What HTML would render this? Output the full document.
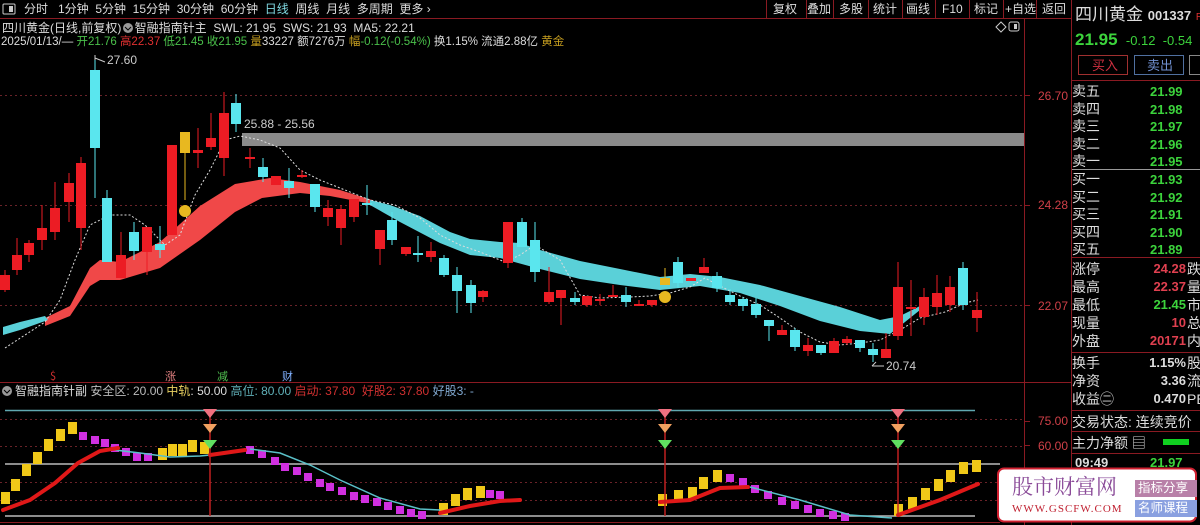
<!DOCTYPE html>
<html><head><meta charset="utf-8"><style>
*{margin:0;padding:0;box-sizing:border-box}
body{width:1200px;height:525px;background:#000;overflow:hidden;position:relative;font-family:"Liberation Sans","Noto Sans CJK SC",sans-serif;color:#ddd}
.t{position:absolute;white-space:nowrap;font-size:12px;line-height:14px}
svg{position:absolute;left:0;top:0}
.rp{position:absolute;left:1072px;font-size:14px;line-height:17px;white-space:nowrap}
</style></head><body>
<svg width="1200" height="525" id="s">
<line x1="0" y1="18.5" x2="1072" y2="18.5" stroke="#8a1a22"/>
<line x1="1024.5" y1="18" x2="1024.5" y2="525" stroke="#8a1a22"/>
<line x1="1071.5" y1="0" x2="1071.5" y2="525" stroke="#8a1a22"/>
<line x1="0" y1="382.5" x2="1072" y2="382.5" stroke="#8a1a22"/>
<line x1="0" y1="522.5" x2="1000" y2="522.5" stroke="#8a1a22"/>
<g stroke="#8a1a22">
<line x1="766.5" y1="0" x2="766.5" y2="18"/><line x1="806.5" y1="0" x2="806.5" y2="18"/><line x1="833.5" y1="0" x2="833.5" y2="18"/><line x1="868.5" y1="0" x2="868.5" y2="18"/><line x1="902.5" y1="0" x2="902.5" y2="18"/><line x1="935.5" y1="0" x2="935.5" y2="18"/><line x1="969.5" y1="0" x2="969.5" y2="18"/><line x1="1003.5" y1="0" x2="1003.5" y2="18"/><line x1="1036.5" y1="0" x2="1036.5" y2="18"/>
</g>
<g stroke="#6a2228" stroke-dasharray="2,3">
<line x1="0" y1="95.5" x2="1024" y2="95.5"/><line x1="0" y1="205.5" x2="1024" y2="205.5"/><line x1="0" y1="305.5" x2="1024" y2="305.5"/>
<line x1="0" y1="419.5" x2="1024" y2="419.5"/><line x1="0" y1="446.5" x2="1024" y2="446.5"/><line x1="0" y1="482.5" x2="1024" y2="482.5"/><line x1="0" y1="500.5" x2="1024" y2="500.5"/>
</g>
<g stroke="#8a1a22"><line x1="1024" y1="95.5" x2="1030" y2="95.5"/><line x1="1024" y1="205.5" x2="1030" y2="205.5"/><line x1="1024" y1="305.5" x2="1030" y2="305.5"/><line x1="1024" y1="421.5" x2="1030" y2="421.5"/><line x1="1024" y1="445.5" x2="1030" y2="445.5"/></g>
<rect x="242" y="133" width="782" height="13" fill="#8a8a8a"/>
<path d="M45,318 L70,306 L90,268 L100,260 L120,262 L160,242 L200,206 L235,184 L270,178 L300,182 L340,190 L372,200 L372,204 L330,196 L300,193 L262,198 L235,212 L200,240 L160,268 L120,280 L100,280 L90,286 L70,316 L45,326Z" fill="#f04848"/>
<path d="M3,327 L20,322 L45,316 L48,320 L20,330 L3,335Z" fill="#5ad0d8"/>
<path d="M370,200 L390,205 L420,216 L450,232 L470,239 L500,242 L520,243 L540,250 L580,261 L620,269 L660,277 L690,274 L720,277 L760,285 L800,296 L840,307 L880,320 L900,316 L920,306 L920,310 L890,334 L860,331 L820,321 L780,306 L740,293 L700,286 L660,290 L620,285 L580,279 L540,269 L500,258 L470,255 L440,243 L400,222 L370,205Z" fill="#5ad0d8"/>
<path d="M5,348 L25,335 L45,322 L60,300 L75,260 L90,225 L110,215 L130,215 L145,225 L165,245 L180,235 L195,195 L210,170 L225,140 L240,136 L260,140 L280,148 L300,170 L320,180 L345,190 L370,200 L395,205 L420,218 L440,235 L460,245 L480,252 L505,262 L520,255 L535,245 L560,260 L580,295 L600,298 L630,297 L650,296 L670,293 L690,287 L705,278 L720,286 L740,296 L760,305 L780,318 L800,332 L820,342 L840,345 L860,343 L880,340 L900,330 L920,318 L945,312 L965,303 L978,300" stroke="#ddd" stroke-width="1" stroke-dasharray="2,2" fill="none"/>
<g id="c"></g>
<g fill="#ccc" font-size="12" font-family="Liberation Sans,sans-serif">
<text x="107" y="64">27.60</text>
<text x="244" y="128">25.88 - 25.56</text>
<text x="886" y="370">20.74</text>
</g>
<path d="M95,55 L95,60 M95,58 L105,62" stroke="#ccc" fill="none"/>
<path d="M872,366 L884,366 M872,366 L876,362" stroke="#ccc" fill="none"/>
<g fill="#d04048" font-size="12" font-family="Liberation Sans,sans-serif">
<text x="1038" y="100">26.70</text><text x="1038" y="209">24.28</text><text x="1038" y="310">22.07</text><text x="1038" y="425">75.00</text><text x="1038" y="450">60.00</text>
</g>
<g font-size="11" font-family="Noto Sans CJK SC,sans-serif">
<text x="50" y="380" fill="#d03030">$</text><text x="165" y="380" fill="#e08080">涨</text><text x="217" y="380" fill="#50c050">减</text><text x="282" y="380" fill="#80b0ff">财</text>
</g>
<line x1="5" y1="410.5" x2="975" y2="410.5" stroke="#60a8b0" stroke-width="1.5"/>
<line x1="5" y1="464" x2="1000" y2="464" stroke="#bbb" stroke-width="1.5"/>
<line x1="5" y1="516" x2="975" y2="516" stroke="#bbb" stroke-width="1.5"/>
<g id="ind"></g>
<path d="M115,450 L140,453 L170,457 L200,456 L210,455 M250,449 L280,453 L310,465 L340,480 L380,498 L420,509 L440,510 M750,487 L800,500 L850,515 L892,518" stroke="#5ac0c8" stroke-width="1.5" fill="none"/>
<path d="M3,510 L30,500 L55,483 L78,463 L100,451 L118,448 M210,455 L245,450 M440,513 L470,506 L500,501 L520,500 M660,502 L690,500 L720,488 L748,487 M898,515 L940,500 L978,484" stroke="#e01818" stroke-width="4" fill="none" stroke-linecap="round"/>
<g stroke="#c02020" stroke-width="1.5"><line x1="210" y1="412" x2="210" y2="516"/><line x1="665" y1="412" x2="665" y2="516"/><line x1="898" y1="412" x2="898" y2="516"/></g>
<g id="dia"></g>
<path d="M996,27 L1001,22 L1006,27 L1001,32Z" stroke="#ccc" fill="none"/>
<rect x="1009" y="22" width="10" height="9" rx="2" stroke="#ccc" fill="none"/><rect x="1014" y="24" width="3" height="5" fill="#ccc"/>
<g stroke="#8a1a22"><line x1="1072" y1="80.5" x2="1200" y2="80.5"/><line x1="1072" y1="257.5" x2="1200" y2="257.5"/><line x1="1072" y1="352.5" x2="1200" y2="352.5"/><line x1="1072" y1="410.5" x2="1200" y2="410.5"/><line x1="1072" y1="431.5" x2="1200" y2="431.5"/><line x1="1072" y1="453.5" x2="1200" y2="453.5"/></g>
<line x1="1072" y1="169.5" x2="1200" y2="169.5" stroke="#999"/>
<rect x="1078.5" y="55.5" width="49" height="19" stroke="#a03030" fill="none"/>
<rect x="1134.5" y="55.5" width="49" height="19" stroke="#5070a0" fill="none"/>
<rect x="1189.5" y="55.5" width="20" height="19" stroke="#888" fill="none"/>
<rect x="1163" y="439" width="26" height="6" fill="#10d020"/>
<rect x="3" y="4" width="12" height="10" rx="1" stroke="#ccc" fill="none"/><rect x="9" y="6" width="4" height="6" fill="#ccc"/>
<circle cx="128" cy="28" r="5" fill="#999"/><path d="M125,27 L128,30 L131,27" stroke="#000" fill="none"/>
<circle cx="7" cy="391" r="5" fill="#999"/><path d="M4,390 L7,393 L10,390" stroke="#000" fill="none"/>
<rect x="998" y="468.5" width="198" height="53" rx="6" fill="#fff" stroke="#d02030" stroke-width="2"/>
<rect x="1135" y="480" width="62" height="17" fill="#b880a8"/>
<rect x="1135" y="500" width="62" height="17" fill="#8aa0e0"/>
</svg>
<script>
var C=[[5,275,290,'r',270,292],[17,255,270,'r',238,275],[29,243,255,'r',240,262],[42,228,240,'r',205,250],[55,208,232,'r',182,240],[69,183,202,'r',173,222],[81,163,228,'r',157,250],[95,70,148,'c',55,198],[107,198,262,'c',190,262],[121,255,278,'r',232,278],[134,232,251,'c',222,260],[147,227,252,'r',227,275],[160,244,250,'c',226,258],[172,145,235,'r',145,235],[185,132,153,'g',132,200],[198,150,153,'r',128,168],[211,138,147,'r',113,150],[224,113,158,'r',92,176],[236,103,124,'c',94,132],[250,157,158,'r',148,168],[263,167,177,'c',158,182],[276,176,185,'r',176,185],[289,181,188,'c',168,198],[302,175,177,'r',170,178],[315,184,207,'c',184,212],[328,208,217,'r',200,226],[341,209,228,'r',205,245],[354,199,217,'r',199,222],[367,203,205,'c',185,215],[380,230,249,'r',230,265],[392,220,240,'c',212,245],[406,247,254,'r',247,256],[418,253,254,'c',236,262],[431,251,257,'r',242,262],[444,258,275,'c',255,277],[457,275,291,'c',267,313],[471,285,303,'c',280,313],[483,291,297,'r',290,302],[508,222,263,'r',222,268],[522,222,247,'c',218,247],[535,240,272,'c',222,282],[549,292,302,'r',267,304],[561,290,298,'r',290,325],[575,298,302,'c',292,305],[587,296,305,'r',296,307],[600,299,301,'r',294,305],[613,295,297,'r',285,297],[626,295,302,'c',287,307],[639,304,306,'r',300,306],[652,300,305,'r',300,307],[665,278,285,'g',268,285],[678,262,283,'c',257,288],[691,278,281,'r',278,281],[704,267,273,'r',258,273],[717,276,288,'c',272,292],[730,295,302,'c',289,305],[743,299,306,'c',297,311],[756,304,315,'c',298,318],[769,320,326,'c',320,341],[782,330,335,'r',325,335],[795,330,347,'c',328,351],[808,345,351,'r',338,356],[821,345,353,'c',345,355],[834,341,353,'r',338,353],[847,339,343,'r',336,345],[860,340,348,'c',340,352],[873,349,355,'c',343,362],[886,349,358,'r',333,358],[898,287,336,'r',262,340],[911,307,308,'r',280,336],[924,297,317,'r',288,325],[937,293,307,'r',275,315],[950,287,305,'r',276,312],[963,268,305,'c',262,310],[977,310,318,'r',292,332]];
var col={r:'#ec1c24',c:'#5ae6ee',g:'#e8b820'};var h='';
C.forEach(function(a){var f=col[a[3]];h+='<line x1="'+a[0]+'" y1="'+a[4]+'" x2="'+a[0]+'" y2="'+a[5]+'" stroke="'+f+'"/>';h+='<rect x="'+(a[0]-5)+'" y="'+a[1]+'" width="10" height="'+Math.max(2,a[2]-a[1])+'" fill="'+f+'"/>';});
h+='<circle cx="185" cy="211" r="6" fill="#e8b820"/><circle cx="665" cy="297" r="6" fill="#e8b820"/>';
document.getElementById('c').innerHTML=h;
var Y=[[5,500],[15,487],[26,472],[37,460],[48,447],[60,437],[72,430],[162,456],[172,452],[182,452],[192,448],[204,450],[443,511],[455,502],[467,496],[480,494],[662,502],[678,498],[692,495],[703,485],[717,478],[898,512],[912,505],[925,496],[938,487],[950,478],[963,470],[976,468]];
var M=[[83,437],[95,441],[105,444],[115,449],[126,453],[137,458],[148,458],[250,451],[262,455],[275,462],[285,468],[297,472],[308,478],[320,484],[330,488],[342,492],[354,497],[365,500],[377,503],[388,507],[400,511],[411,514],[422,516],[490,495],[500,496],[730,479],[743,483],[755,490],[768,496],[782,502],[795,506],[808,510],[820,514],[833,516],[845,518]];
var g='';Y.forEach(function(p){g+='<rect x="'+(p[0]-4)+'" y="'+(p[1]-8)+'" width="9" height="12" fill="#f0c818"/>';});
M.forEach(function(p){g+='<rect x="'+(p[0]-4)+'" y="'+(p[1]-5)+'" width="8" height="8" fill="#d030e0"/>';});
document.getElementById('ind').innerHTML=g;
var d='';[210,665,898].forEach(function(x){[[412,'#f07080'],[427,'#f0a060'],[443,'#60e060']].forEach(function(q){d+='<path d="M'+(x-7)+','+(q[0]-3)+' L'+(x+7)+','+(q[0]-3)+' L'+x+','+(q[0]+6)+'Z" fill="'+q[1]+'"/>';});});
document.getElementById('dia').innerHTML=d;
</script>
<div class="t" style="left:24px;top:2px;word-spacing:0">分时&nbsp;&nbsp; 1分钟&nbsp;&nbsp;5分钟&nbsp;&nbsp;15分钟&nbsp;&nbsp;30分钟&nbsp;&nbsp;60分钟&nbsp;&nbsp;<span style="color:#7fd8e0">日线</span>&nbsp;&nbsp;周线&nbsp;&nbsp;月线&nbsp;&nbsp;多周期&nbsp;&nbsp;更多 ›</div>
<div class="t" style="left:773px;top:2px">复权</div><div class="t" style="left:807px;top:2px">叠加</div><div class="t" style="left:839px;top:2px">多股</div><div class="t" style="left:873px;top:2px">统计</div><div class="t" style="left:906px;top:2px">画线</div><div class="t" style="left:942px;top:2px">F10</div><div class="t" style="left:974px;top:2px">标记</div><div class="t" style="left:1005px;top:2px">+自选</div><div class="t" style="left:1042px;top:2px">返回</div>
<div class="t" style="left:2px;top:21px">四川黄金(日线,前复权) &nbsp;&nbsp; 智融指南针主 &nbsp;SWL: 21.95 &nbsp;SWS: 21.93 &nbsp;MA5: 22.21</div>
<div class="t" style="left:1px;top:35px;font-size:11.5px">2025/01/13/— <span style="color:#4ac04a">开21.76</span> <span style="color:#e03030">高22.37</span> <span style="color:#4ac04a">低21.45</span> <span style="color:#4ac04a">收21.95</span> <span style="color:#c8a020">量</span>33227 额7276万 <span style="color:#c8a020">幅</span><span style="color:#4ac04a">-0.12(-0.54%)</span> 换1.15% 流通2.88亿 <span style="color:#c8a020">黄金</span></div>
<div class="t" style="left:15px;top:384px">智融指南针副 <span style="color:#bbb">安全区: 20.00</span> <span style="color:#e8d060">中轨</span>: 50.00 <span style="color:#60b0b8">高位: 80.00</span> <span style="color:#d03030">启动: 37.80 &nbsp;好股2: 37.80</span> <span style="color:#80a8d0">好股3: -</span></div>
<div class="rp" style="left:1075px;top:5px;font-size:17px;line-height:20px">四川黄金 <span style="font-size:13px;font-weight:bold">001337</span> <span style="color:#e03030;font-size:10px">RI</span></div>
<div class="rp" style="left:1075px;top:30px;color:#3cd43c;font-weight:bold;font-size:17px;line-height:20px">21.95 <span style="font-size:13px;font-weight:normal">&nbsp;-0.12 &nbsp;-0.54</span></div>
<div class="rp" style="left:1092px;top:57px;color:#d03040;font-size:13px">买入</div>
<div class="rp" style="left:1147px;top:57px;color:#7090d0;font-size:13px">卖出</div>
<div class="rp" style="top:83px;line-height:17.5px">卖五<br>卖四<br>卖三<br>卖二<br>卖一</div>
<div class="rp" style="left:1150px;top:83px;line-height:17.5px;color:#3cd43c;font-weight:bold;font-size:13px">21.99<br>21.98<br>21.97<br>21.96<br>21.95</div>
<div class="rp" style="top:171px;line-height:17.5px">买一<br>买二<br>买三<br>买四<br>买五</div>
<div class="rp" style="left:1150px;top:171px;line-height:17.5px;color:#3cd43c;font-weight:bold;font-size:13px">21.93<br>21.92<br>21.91<br>21.90<br>21.89</div>
<div class="rp" style="top:260px;line-height:18px">涨停<br>最高<br>最低<br>现量<br>外盘</div>
<div class="rp" style="left:1140px;top:260px;line-height:18px;font-weight:bold;font-size:13px;text-align:right;width:46px"><span style="color:#e04050">24.28</span><br><span style="color:#e04050">22.37</span><br><span style="color:#3cd43c">21.45</span><br><span style="color:#e04050">10</span><br><span style="color:#e04050">20171</span></div>
<div class="rp" style="left:1187px;top:260px;line-height:18px">跌<br>量<br>市<br>总<br>内</div>
<div class="rp" style="top:354px;line-height:18px">换手<br>净资<br>收益㊁</div>
<div class="rp" style="left:1140px;top:354px;line-height:18px;font-weight:bold;font-size:13px;text-align:right;width:46px">1.15%<br>3.36<br>0.470</div>
<div class="rp" style="left:1187px;top:354px;line-height:18px">股<br>流<br>PE</div>
<div class="rp" style="top:413px;line-height:18px">交易状态: 连续竞价</div>
<div class="rp" style="top:434px;line-height:18px">主力净额 ▤</div>
<div class="rp" style="left:1075px;top:455px;font-weight:bold;font-size:13px;line-height:16px">09:49</div>
<div class="rp" style="left:1150px;top:455px;font-weight:bold;font-size:13px;line-height:16px;color:#3cd43c">21.97</div>
<div class="t" style="left:1012px;top:474px;font-size:21px;line-height:24px;color:#8a4a98;font-family:'Noto Serif CJK SC',serif">股市财富网</div>
<div class="t" style="left:1012px;top:502px;font-size:11px;color:#c02030;font-family:'Liberation Serif',serif;letter-spacing:1px">WWW.GSCFW.COM</div>
<div class="t" style="left:1138px;top:481px;font-size:12.5px;color:#fff">指标分享</div>
<div class="t" style="left:1138px;top:501px;font-size:12.5px;color:#fff">名师课程</div>
</body></html>
